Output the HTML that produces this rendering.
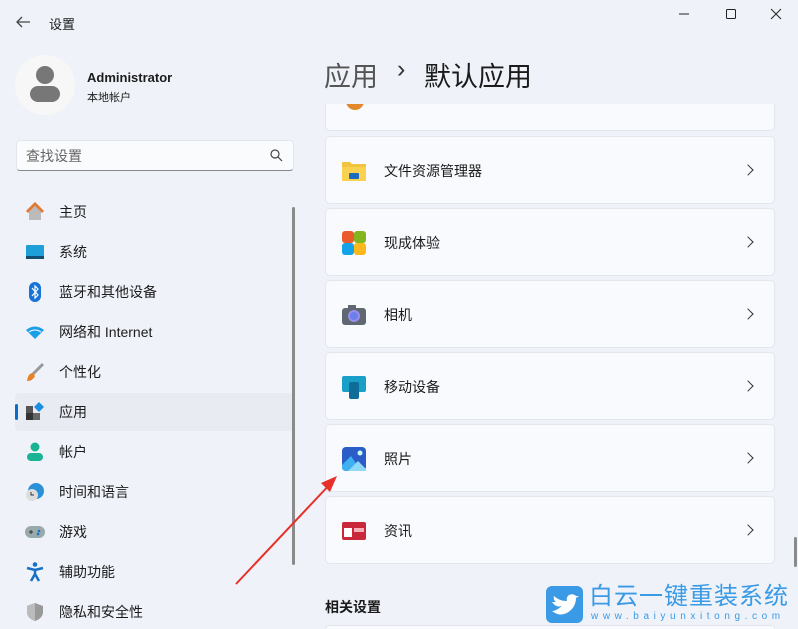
<!DOCTYPE html>
<html style="width:798px;height:629px;overflow:hidden"><head><meta charset="utf-8"><style>
*{margin:0;padding:0;box-sizing:border-box}
body{width:798px;height:629px;overflow:hidden;background:#eff3f9;font-family:"Liberation Sans","Noto Sans CJK SC",sans-serif;color:#1b1b1b;position:relative}
.a{position:absolute;white-space:nowrap}
.nav{position:absolute;left:15px;width:279px;height:38px;font-size:14px}
.nav .ic{position:absolute;left:10px;top:9px;width:20px;height:20px}
.nav span{position:absolute;left:44px;top:9px}
.card{position:absolute;left:325px;width:450px;height:68px;background:#f9fafd;border:1px solid #e3e6ec;border-radius:5px}
.card span{position:absolute;left:58px;top:24px;font-size:14px}
.card .chev{position:absolute;right:22px;top:29px;width:8px;height:8px;border-right:1.4px solid #333;border-top:1.4px solid #333;transform:rotate(45deg)}
.card .ic{position:absolute;left:16px;top:22px;width:24px;height:24px}
</style></head><body>
<svg class="a" style="left:14px;top:14px" width="18" height="16"><path d="M16 8H3M8 3L3 8l5 5" stroke="#444" stroke-width="1.3" fill="none"/></svg>
<div class="a" style="left:49px;top:14px;font-size:13px">设置</div>
<svg class="a" style="left:673px;top:8px" width="120" height="14"><path d="M6 6h10" stroke="#222"/><rect x="53.5" y="1.5" width="9" height="9" rx="1" stroke="#222" fill="none"/><path d="M98 1l10 10M108 1L98 11" stroke="#222"/></svg>
<div class="a" style="left:15px;top:55px;width:60px;height:60px;border-radius:50%;background:#f7f7f8"></div>
<div class="a" style="left:36px;top:66px;width:18px;height:18px;border-radius:50%;background:#777"></div>
<div class="a" style="left:30px;top:86px;width:30px;height:16px;border-radius:8px;background:#777"></div>
<div class="a" style="left:87px;top:70px;font-size:13px;font-weight:bold">Administrator</div>
<div class="a" style="left:87px;top:89px;font-size:11px">本地帐户</div>
<div class="a" style="left:16px;top:140px;width:278px;height:31px;background:#fafbfd;border:1px solid #e3e6ec;border-bottom:1px solid #888;border-radius:4px"></div>
<div class="a" style="left:26px;top:146px;font-size:14px;color:#666">查找设置</div>
<svg class="a" style="left:270px;top:149px" width="13" height="13"><circle cx="5" cy="5" r="4" stroke="#444" fill="none" stroke-width="1.2"/><path d="M8 8l4 4" stroke="#444" stroke-width="1.2"/></svg>
<div class="nav" style="top:193px"><svg class="ic" viewBox="0 0 20 20"><path d="M2 10L10 2l8 8" stroke="#e07b36" stroke-width="3" fill="none"/><path d="M4 10v8h12v-8L10 4z" fill="#bbb"/></svg><span>主页</span></div>
<div class="nav" style="top:233px"><svg class="ic" viewBox="0 0 20 20"><rect x="1" y="3" width="18" height="13" rx="1" fill="#1da0d8"/><rect x="1" y="14" width="18" height="3" fill="#124e72"/></svg><span>系统</span></div>
<div class="nav" style="top:273px"><svg class="ic" viewBox="0 0 20 20"><rect x="4" y="0" width="12" height="20" rx="6" fill="#1673d8"/><path d="M7 6l6 7-3 3V4l3 3-6 7" stroke="#fff" fill="none" stroke-width="1.2"/></svg><span>蓝牙和其他设备</span></div>
<div class="nav" style="top:313px"><svg class="ic" viewBox="0 0 20 20"><path d="M1 8q9-7 18 0l-9 9z" fill="#1a9fe8"/><path d="M4 10q6-4 12 0" stroke="#fff" fill="none"/></svg><span>网络和 Internet</span></div>
<div class="nav" style="top:353px"><svg class="ic" viewBox="0 0 20 20"><path d="M18 2L8 12" stroke="#999" stroke-width="3"/><path d="M8 11q-5 0-6 8q6 0 8-5z" fill="#e8832a"/></svg><span>个性化</span></div>
<div class="nav" style="top:393px;background:#e8ebf1;border-radius:4px"><div class="a" style="left:0;top:11px;width:3px;height:16px;background:#0d6bc9;border-radius:2px"></div><svg class="ic" viewBox="0 0 20 20"><rect x="1" y="4" width="7" height="7" fill="#555"/><rect x="1" y="11" width="7" height="7" fill="#333"/><rect x="8" y="11" width="7" height="7" fill="#666"/><path d="M14 0l5 5-5 5-5-5z" fill="#1a8fe0"/></svg><span>应用</span></div>
<div class="nav" style="top:433px"><svg class="ic" viewBox="0 0 20 20"><circle cx="10" cy="5" r="4.5" fill="#1ab394"/><rect x="2" y="11" width="16" height="8" rx="4" fill="#1ab394"/></svg><span>帐户</span></div>
<div class="nav" style="top:473px"><svg class="ic" viewBox="0 0 20 20"><circle cx="11" cy="9" r="8" fill="#2a90d8"/><circle cx="7" cy="13" r="6" fill="#ddd"/><path d="M6 10v3h3" stroke="#333" fill="none"/></svg><span>时间和语言</span></div>
<div class="nav" style="top:513px"><svg class="ic" viewBox="0 0 20 20"><rect x="0" y="4" width="20" height="12" rx="6" fill="#9aa"/><path d="M4 10h4M6 8v4" stroke="#333"/><circle cx="14" cy="9" r="1.3" fill="#1a6fd0"/><circle cx="13" cy="12" r="1.3" fill="#1a6fd0"/></svg><span>游戏</span></div>
<div class="nav" style="top:553px"><svg class="ic" viewBox="0 0 20 20"><circle cx="10" cy="2.5" r="2.3" fill="#1670c8"/><path d="M2 6l8 2 8-2M10 8v4l-4 7M10 12l4 7" stroke="#1670c8" stroke-width="2.5" fill="none"/></svg><span>辅助功能</span></div>
<div class="nav" style="top:593px"><svg class="ic" viewBox="0 0 20 20"><path d="M10 1l8 3v6q0 6-8 9q-8-3-8-9V4z" fill="#999"/><path d="M10 1v18q-8-3-8-9V4z" fill="#bbb"/></svg><span>隐私和安全性</span></div>
<div class="a" style="left:292px;top:207px;width:3px;height:358px;background:#8a8a8a;border-radius:2px"></div>
<div class="a" style="left:324px;top:55px;font-size:27px;color:#555">应用</div>
<div class="a" style="left:397px;top:55px;font-size:25px;color:#333">›</div>
<div class="a" style="left:424px;top:55px;font-size:27px;color:#1b1b1b">默认应用</div>
<div class="card" style="top:80px;height:51px;border-top:none;clip-path:inset(24px -2px -2px -2px)"><div class="a" style="left:20px;top:12px;width:18px;height:18px;border-radius:50%;background:#e2882a"></div></div>
<div class="card" style="top:136px"><svg class="ic" viewBox="0 0 24 24"><path d="M0 3h8l2 2h14v17H0z" fill="#f2c341"/><rect x="0" y="8" width="24" height="14" fill="#fbd24f"/><rect x="7" y="14" width="10" height="6" rx="1" fill="#1b6cc0"/></svg><span>文件资源管理器</span><i class="chev"></i></div>
<div class="card" style="top:208px"><svg class="ic" viewBox="0 0 24 24"><rect x="0" y="0" width="12" height="12" rx="3" fill="#eb5a2c"/><rect x="12" y="0" width="12" height="12" rx="3" fill="#82b51f"/><rect x="0" y="12" width="12" height="12" rx="3" fill="#14a2e8"/><rect x="12" y="12" width="12" height="12" rx="3" fill="#fbb81c"/></svg><span>现成体验</span><i class="chev"></i></div>
<div class="card" style="top:280px"><svg class="ic" viewBox="0 0 24 24"><rect x="0" y="5" width="24" height="17" rx="3" fill="#5f6770"/><rect x="6" y="2" width="8" height="5" fill="#5f6770"/><circle cx="12" cy="13" r="6" fill="#9b8cf0"/><circle cx="12" cy="13" r="4" fill="#6b7fe8"/></svg><span>相机</span><i class="chev"></i></div>
<div class="card" style="top:352px"><svg class="ic" viewBox="0 0 24 24"><rect x="0" y="1" width="24" height="16" rx="2" fill="#1aa0c8"/><rect x="7" y="7" width="10" height="17" rx="2" fill="#0f6d9a"/></svg><span>移动设备</span><i class="chev"></i></div>
<div class="card" style="top:424px"><svg class="ic" viewBox="0 0 24 24"><rect x="0" y="0" width="24" height="24" rx="4" fill="#2b5cc8"/><path d="M0 18l9-9 10 15H4q-4 0-4-4z" fill="#3fb0f0"/><path d="M6 24l10-10 8 8v2z" fill="#8fd8f8"/><circle cx="18" cy="6" r="2.5" fill="#cfe"/></svg><span>照片</span><i class="chev"></i></div>
<div class="card" style="top:496px"><svg class="ic" viewBox="0 0 24 24"><rect x="0" y="3" width="24" height="18" rx="2" fill="#c9283a"/><rect x="2" y="9" width="8" height="9" fill="#fff"/><rect x="12" y="9" width="10" height="4" fill="#f4b0b8"/></svg><span>资讯</span><i class="chev"></i></div>
<div class="a" style="left:325px;top:597px;font-size:14px;font-weight:bold">相关设置</div>
<div class="a" style="left:325px;top:625px;width:450px;height:4px;background:#f9fafd;border:1px solid #e3e6ec;border-bottom:none;border-radius:5px 5px 0 0"></div>
<div class="a" style="left:794px;top:537px;width:3px;height:30px;background:#8a8a8a;border-radius:2px"></div>
<svg class="a" style="left:220px;top:470px" width="120" height="120"><path d="M16 114L113 11" stroke="#e8302a" stroke-width="2"/><path d="M117 6l-16 7 9 9z" fill="#e8302a"/></svg>
<div class="a" style="left:546px;top:586px;width:37px;height:37px;background:#3a9ae6;border-radius:6px"></div>
<svg class="a" style="left:550px;top:592px" width="30" height="26"><path d="M2 10q4 6 10 4-6 5-10 5 10 8 20-2 4-5 4-11l3-2-3 0q-3-3-7-1-3 2-2 6-8 0-13-5-1 4 2 6z" fill="#fff"/></svg>
<div class="a" style="left:589px;top:582px;font-size:24px;color:#3a9ae6;letter-spacing:1px;line-height:30px">白云一键重装系统</div>
<div class="a" style="left:591px;top:611px;font-size:10px;color:#3a9ae6;letter-spacing:4.6px;line-height:12px">www.baiyunxitong.com</div>
</body></html>
